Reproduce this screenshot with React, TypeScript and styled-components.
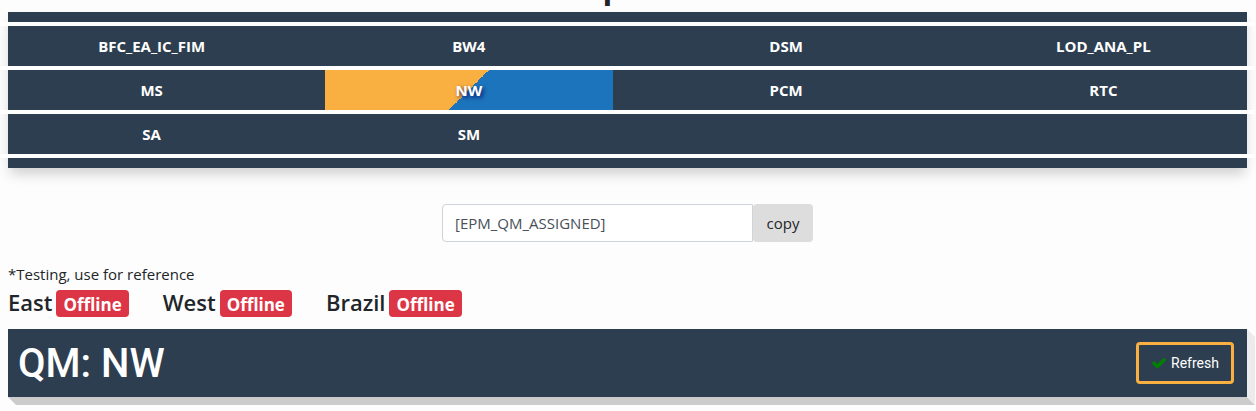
import React from "react";
import styled, { createGlobalStyle } from "styled-components";

const GlobalStyle = createGlobalStyle`
  *, *::before, *::after { box-sizing: border-box; }
  body {
    margin: 0;
    background: #fdfdfd;
    color: #212529;
    font-family: "Open Sans", "Noto Sans", sans-serif;
    font-size: 15px;
    line-height: 24px;
    overflow-x: hidden;
  }
  button, input { font: inherit; }
`;

const Page = styled.main`
  padding: 0 9px 14px 8px;
`;

const Title = styled.h1`
  display: flex;
  align-items: flex-end;
  justify-content: center;
  height: 12px;
  margin: 0;
  padding-right: 30px;
  overflow: hidden;
  font-size: 32px;
  font-weight: 700;
  line-height: 52px;
`;

const Board = styled.nav`
  background: #2d3e50;
  padding: 10px 0;
  box-shadow: 0 8px 12px -2px rgba(0, 0, 0, 0.18);
`;

const Divider = styled.div`
  height: 4px;
  margin: 0 -8px;
  background: #fff;
`;

const Row = styled.div`
  display: grid;
  grid-template-columns: repeat(4, 1fr);
  column-gap: 30px;
  height: 40px;
`;

const Cell = styled.button<{ $active?: boolean }>`
  border: 0;
  padding: 0;
  color: #fff;
  font-weight: 700;
  cursor: pointer;
  background: ${(p) =>
    p.$active ? "linear-gradient(135deg, #fab040 50%, #1c75bc 50%)" : "transparent"};
  text-shadow: ${(p) => (p.$active ? "2px 2px 4px rgba(0, 0, 100, 0.8)" : "none")};
`;

const CopyForm = styled.form`
  display: flex;
  width: 371px;
  max-width: 100%;
  height: 38px;
  margin: 36px auto 20px;
`;

const CopyInput = styled.input`
  flex: 1;
  min-width: 0;
  padding: 0 12px;
  border: 1px solid #ced4da;
  border-radius: 4px 0 0 4px;
  background: #fff;
  color: #495057;
`;

const CopyButton = styled.button`
  width: 60px;
  padding: 0;
  border: 0;
  border-radius: 4px;
  background: #ddd;
  color: #212529;
`;

const Note = styled.p`
  margin: 0;
`;

const Regions = styled.div`
  display: flex;
  gap: 34px;
  height: 31px;
  margin-bottom: 12px;
`;

const Region = styled.h2`
  display: flex;
  align-items: center;
  gap: 4px;
  margin: 0;
  font-size: 22px;
  font-weight: 600;
  line-height: 30px;
`;

const Badge = styled.span`
  height: 27px;
  padding: 0 7px;
  margin-top: 4px;
  border-radius: 4px;
  background: #dc3545;
  color: #fff;
  font-size: 17px;
  font-weight: 700;
  line-height: 30px;
`;

const Banner = styled.header`
  position: relative;
  display: flex;
  align-items: center;
  justify-content: space-between;
  height: 68px;
  padding: 0 13px 0 10px;
  background: #2d3e50;
  color: #fff;
  font-family: Roboto, sans-serif;

  &::before,
  &::after {
    content: "";
    position: absolute;
  }
  &::before {
    top: 100%;
    left: 0;
    right: -8px;
    height: 8px;
    background: #ccc;
    clip-path: polygon(0 0, calc(100% - 8px) 0, 100% 100%, 8px 100%);
  }
  &::after {
    top: 0;
    bottom: -8px;
    left: 100%;
    width: 8px;
    background: #ebebeb;
    clip-path: polygon(0 0, 100% 8px, 100% 100%, 0 calc(100% - 8px));
  }
`;

const BannerTitle = styled.h2`
  margin: 0;
  padding-top: 2px;
  font-size: 40px;
  font-weight: 500;
  line-height: 48px;
`;

const Refresh = styled.button`
  display: flex;
  align-items: center;
  justify-content: center;
  gap: 4px;
  width: 98px;
  height: 42px;
  padding: 0;
  border: 3px solid #fab040;
  border-radius: 4px;
  background: transparent;
  color: #fff;
  font-size: 14px;
`;

const rows = [
  ["BFC_EA_IC_FIM", "BW4", "DSM", "LOD_ANA_PL"],
  ["MS", "NW", "PCM", "RTC"],
  ["SA", "SM"],
];

const regions = ["East", "West", "Brazil"];

export default function App() {
  return (
    <>
      <GlobalStyle />
      <Page>
        <Title>p</Title>
        <Board>
          <Divider />
          {rows.map((row) => (
            <React.Fragment key={row[0]}>
              <Row>
                {row.map((name) => (
                  <Cell key={name} type="button" $active={name === "NW"}>
                    {name}
                  </Cell>
                ))}
              </Row>
              <Divider />
            </React.Fragment>
          ))}
        </Board>
        <CopyForm onSubmit={(e) => e.preventDefault()}>
          <CopyInput aria-label="Queue tag" defaultValue="[EPM_QM_ASSIGNED]" />
          <CopyButton type="button">copy</CopyButton>
        </CopyForm>
        <Note>*Testing, use for reference</Note>
        <Regions>
          {regions.map((name) => (
            <Region key={name}>
              {name}
              <Badge>Offline</Badge>
            </Region>
          ))}
        </Regions>
        <Banner>
          <BannerTitle>QM: NW</BannerTitle>
          <Refresh type="button">
            <svg width="16" height="16" viewBox="0 0 1792 1792" fill="#008000" aria-hidden="true">
              <path d="M1671 566q0 40-28 68l-724 724-136 136q-28 28-68 28t-68-28l-136-136-362-362q-28-28-28-68t28-68l136-136q28-28 68-28t68 28l294 295 656-657q28-28 68-28t68 28l136 136q28 28 28 68z" />
            </svg>
            Refresh
          </Refresh>
        </Banner>
      </Page>
    </>
  );
}
